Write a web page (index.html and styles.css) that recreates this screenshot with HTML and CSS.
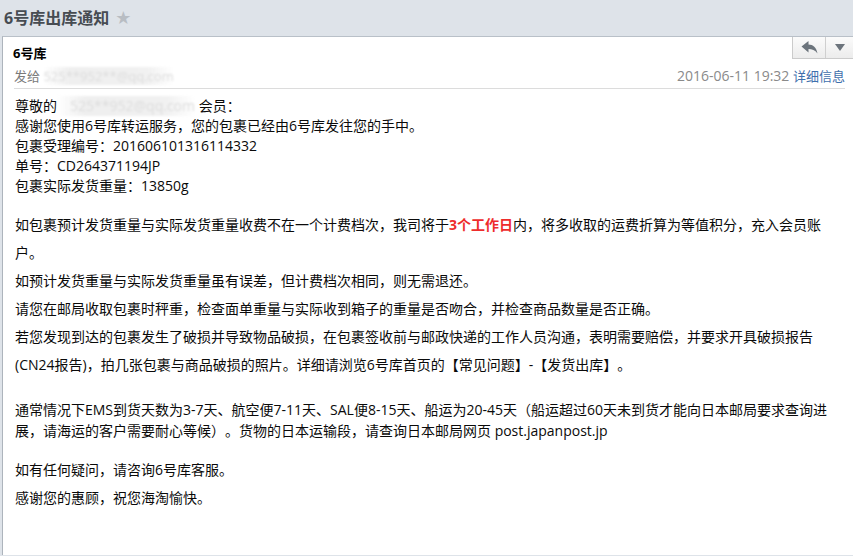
FILE: index.html
```html
<!DOCTYPE html>
<html lang="zh-CN">
<head>
<meta charset="utf-8">
<title>6号库出库通知</title>
<link rel="stylesheet" href="styles.css">
</head>
<body>
<div class="topbar">
  <h1 class="title">6号库出库通知</h1>
  <span class="star">★</span>
</div>
<div class="panel">
  <div class="head">
    <div class="head-top">
      <div class="sender">6号库</div>
      <div class="tools">
        <span class="tool tool-reply">
          <svg width="17" height="13" viewBox="0 0 17 13"><path d="M0.5 5.5 L7.5 0 V3.5 C12 3.5 15.5 6.5 16.5 12.5 C14 9 11 8 7.5 8 V11.5 Z" fill="#6c747c"/></svg>
        </span>
        <span class="tool tool-more">
          <svg width="10" height="7" viewBox="0 0 10 7"><path d="M0 0 H10 L5 7 Z" fill="#6c747c"/></svg>
        </span>
      </div>
    </div>
    <div class="meta">
      <div class="to">发给 <span class="redact">525**952**@qq.com</span></div>
      <div class="when">2016-06-11 19:32 <a class="detail">详细信息</a></div>
    </div>
  </div>
  <div class="body">
    <div class="intro">
      <div>尊敬的<span class="redact redact-name">525**952@qq.com</span> 会员：</div>
      <div>感谢您使用6号库转运服务，您的包裹已经由6号库发往您的手中。</div>
      <div>包裹受理编号：201606101316114332</div>
      <div>单号：CD264371194JP</div>
      <div>包裹实际发货重量：13850g</div>
    </div>
    <div class="notes">
      <p>如包裹预计发货重量与实际发货重量收费不在一个计费档次，我司将于<b class="red">3个工作日</b>内，将多收取的运费折算为等值积分，充入会员账户。</p>
      <p>如预计发货重量与实际发货重量虽有误差，但计费档次相同，则无需退还。</p>
      <p>请您在邮局收取包裹时秤重，检查面单重量与实际收到箱子的重量是否吻合，并检查商品数量是否正确。</p>
      <p>若您发现到达的包裹发生了破损并导致物品破损，在包裹签收前与邮政快递的工作人员沟通，表明需要赔偿，并要求开具破损报告(CN24报告)，拍几张包裹与商品破损的照片。详细请浏览6号库首页的【常见问题】-【发货出库】。</p>
    </div>
    <div class="ship">通常情况下EMS到货天数为3-7天、航空便7-11天、SAL便8-15天、船运为20-45天（船运超过60天未到货才能向日本邮局要求查询进展，请海运的客户需要耐心等候）。货物的日本运输段，请查询日本邮局网页 post.japanpost.jp</div>
    <div class="end">
      <p>如有任何疑问，请咨询6号库客服。</p>
      <p>感谢您的惠顾，祝您海淘愉快。</p>
    </div>
  </div>
</div>
</body>
</html>
```

FILE: styles.css
```css
html, body {
  margin: 0;
  padding: 0;
  height: 100%;
}
body {
  background: #dee3e9;
  font-family: "Open Sans", "Noto Sans CJK SC", "Microsoft YaHei", sans-serif;
  color: #0a0a0a;
  overflow: hidden;
  text-spacing-trim: space-all;
}
.topbar {
  height: 36px;
  display: flex;
  align-items: center;
  padding-left: 4px;
  gap: 6px;
}
.title {
  margin: 0;
  font-size: 16px;
  font-weight: bold;
  color: #474c52;
  line-height: 20px;
}
.star {
  font-family: "DejaVu Sans", sans-serif;
  font-size: 18px;
  color: #b8bdc3;
  line-height: 20px;
}
.panel {
  margin-left: 2px;
  background: #fff;
  border-left: 1px solid #adb4bc;
  border-top: 1px solid #b9c0c8;
  height: calc(100% - 37px);
  box-sizing: border-box;
}
.head {
  padding: 0 8px 0 10px;
}
.head-top {
  display: flex;
  justify-content: space-between;
  align-items: flex-start;
  margin-right: -8px;
}
.sender {
  padding-top: 7px;
  font-size: 13px;
  font-weight: bold;
  line-height: 18px;
  color: #000;
}
.tools {
  display: flex;
  height: 21px;
  border: 1px solid #cbcbcb;
  border-top: none;
  border-right: none;
  background: linear-gradient(#fbfbfb, #ececec);
}
.tool {
  display: flex;
  align-items: center;
  justify-content: center;
  height: 21px;
}
.tool-reply {
  width: 32px;
  border-right: 1px solid #cfcfcf;
}
.tool-more {
  width: 27px;
}
.meta {
  display: flex;
  justify-content: space-between;
  align-items: baseline;
  margin-top: 4px;
  line-height: 20px;
  font-size: 13px;
  padding-bottom: 2px;
  border-bottom: 1px solid #dcdcdc;
  margin-left: 1px;
}
.to {
  color: #7a7a7a;
}
.redact {
  color: #dcdcdc;
  filter: blur(1px);
  background: linear-gradient(90deg, rgba(235,235,235,0) 0%, #efefef 20%, #f1f1f1 80%, rgba(240,240,240,0) 100%);
}
.when {
  color: #8a8a8a;
  font-size: 14px;
}
.detail {
  color: #3f70ad;
  font-size: 13px;
}
.body {
  padding: 7px 0 0 12px;
  width: 827px;
  font-size: 14px;
}
.intro {
  line-height: 20px;
}
.redact-name {
  display: inline-block;
  width: 138px;
  text-align: right;
  white-space: nowrap;
  vertical-align: top;
}
.notes {
  margin-top: 15px;
  line-height: 28px;
}
.notes p, .end p {
  margin: 0;
}
.red {
  color: #ee2c2c;
}
.ship {
  margin-top: 20px;
  line-height: 21px;
}
.end {
  margin-top: 15px;
  line-height: 28px;
}
```
